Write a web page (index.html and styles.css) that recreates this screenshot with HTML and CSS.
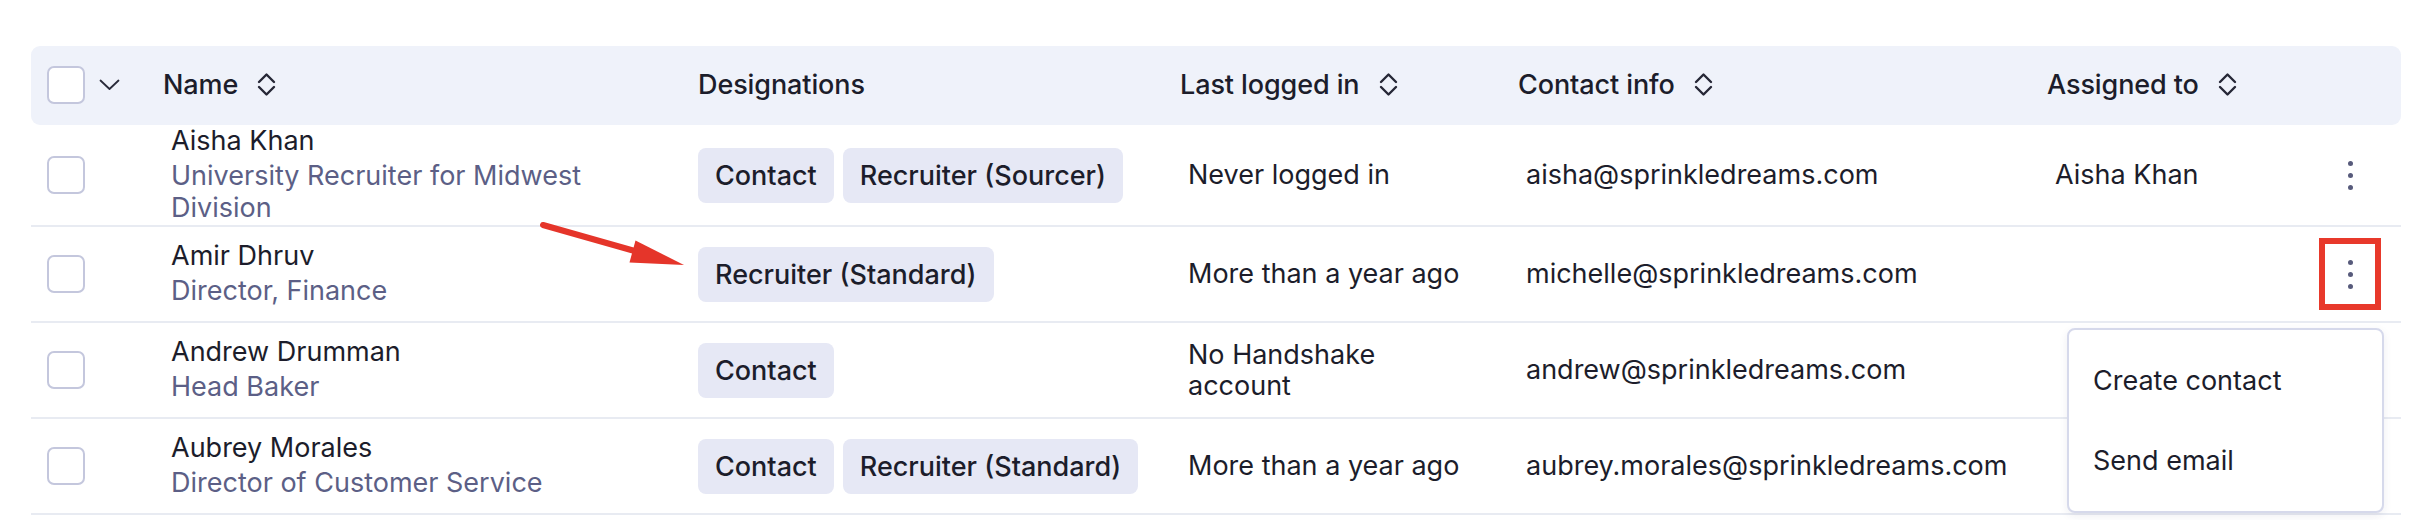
FILE: index.html
```html
<!DOCTYPE html>
<html lang="en">
<head>
<meta charset="utf-8">
<title>Users</title>
<link rel="stylesheet" href="styles.css">
</head>
<body>
<div class="page">
  <div class="table">
    <div class="thead">
      <div class="cell sel">
        <span class="checkbox"></span>
        <svg class="chev" width="21" height="12" viewBox="0 0 21 12"><path d="M1.5 1.5 L10.5 10 L19.5 1.5" fill="none" stroke="#2a2b3a" stroke-width="1.8" stroke-linecap="round" stroke-linejoin="round"/></svg>
      </div>
      <div class="cell th">Name <svg class="sort" width="19" height="25" viewBox="0 0 19 25"><path d="M2 10 L9.5 2.5 L17 10 M2 15 L9.5 22.5 L17 15" fill="none" stroke="#262736" stroke-width="2.4" stroke-linecap="round" stroke-linejoin="round"/></svg></div>
      <div class="cell th">Designations</div>
      <div class="cell th">Last logged in <svg class="sort" width="19" height="25" viewBox="0 0 19 25"><path d="M2 10 L9.5 2.5 L17 10 M2 15 L9.5 22.5 L17 15" fill="none" stroke="#262736" stroke-width="2.4" stroke-linecap="round" stroke-linejoin="round"/></svg></div>
      <div class="cell th">Contact info <svg class="sort" width="19" height="25" viewBox="0 0 19 25"><path d="M2 10 L9.5 2.5 L17 10 M2 15 L9.5 22.5 L17 15" fill="none" stroke="#262736" stroke-width="2.4" stroke-linecap="round" stroke-linejoin="round"/></svg></div>
      <div class="cell th">Assigned to <svg class="sort" width="19" height="25" viewBox="0 0 19 25"><path d="M2 10 L9.5 2.5 L17 10 M2 15 L9.5 22.5 L17 15" fill="none" stroke="#262736" stroke-width="2.4" stroke-linecap="round" stroke-linejoin="round"/></svg></div>
      <div class="cell"></div>
    </div>

    <div class="row">
      <div class="cell sel"><span class="checkbox"></span></div>
      <div class="cell text person">
        <div class="pname">Aisha Khan</div>
        <div class="ptitle">University Recruiter for Midwest Division</div>
      </div>
      <div class="cell tags"><span class="tag">Contact</span><span class="tag">Recruiter (Sourcer)</span></div>
      <div class="cell text"><span class="login">Never logged in</span></div>
      <div class="cell text">aisha@sprinkledreams.com</div>
      <div class="cell text">Aisha Khan</div>
      <div class="cell act"><button class="kebab"><i></i><i></i><i></i></button></div>
    </div>

    <div class="row">
      <div class="cell sel"><span class="checkbox"></span></div>
      <div class="cell text person">
        <div class="pname">Amir Dhruv</div>
        <div class="ptitle">Director, Finance</div>
      </div>
      <div class="cell tags"><span class="tag">Recruiter (Standard)</span></div>
      <div class="cell text"><span class="login">More than a year ago</span></div>
      <div class="cell text">michelle@sprinkledreams.com</div>
      <div class="cell text"></div>
      <div class="cell act"><button class="kebab highlight"><i></i><i></i><i></i></button></div>
    </div>

    <div class="row">
      <div class="cell sel"><span class="checkbox"></span></div>
      <div class="cell text person">
        <div class="pname">Andrew Drumman</div>
        <div class="ptitle">Head Baker</div>
      </div>
      <div class="cell tags"><span class="tag">Contact</span></div>
      <div class="cell text"><span class="login">No Handshake account</span></div>
      <div class="cell text">andrew@sprinkledreams.com</div>
      <div class="cell text"></div>
      <div class="cell act"><button class="kebab"><i></i><i></i><i></i></button></div>
    </div>

    <div class="row">
      <div class="cell sel"><span class="checkbox"></span></div>
      <div class="cell text person">
        <div class="pname">Aubrey Morales</div>
        <div class="ptitle">Director of Customer Service</div>
      </div>
      <div class="cell tags"><span class="tag">Contact</span><span class="tag">Recruiter (Standard)</span></div>
      <div class="cell text"><span class="login">More than a year ago</span></div>
      <div class="cell text">aubrey.morales@sprinkledreams.com</div>
      <div class="cell text"></div>
      <div class="cell act"><button class="kebab"><i></i><i></i><i></i></button></div>
    </div>
  </div>

  <div class="menu">
    <div class="menu-item">Create contact</div>
    <div class="menu-item">Send email</div>
  </div>

  <svg class="arrow" width="2422" height="520" viewBox="0 0 2422 520">
    <line x1="543" y1="225" x2="640" y2="252.5" stroke="#e5352a" stroke-width="6" stroke-linecap="round"/>
    <polygon points="684,265 635.5,240.5 629.5,262.5" fill="#e5352a"/>
  </svg>
</div>
</body>
</html>
```
FILE: styles.css
```css
* { box-sizing: border-box; }

html, body {
  margin: 0;
  background: #ffffff;
}

body {
  font-family: Inter, "Noto Sans", "Liberation Sans", sans-serif;
  font-size: 27px;
  color: #1c1d2b;
}

.page {
  position: relative;
  width: 2422px;
  height: 520px;
  padding: 46px 21px 0 31px;
  overflow: hidden;
}

.table {
  width: 2370px;
}

.thead,
.row {
  display: grid;
  grid-template-columns: 132px 535px 482px 338px 529px 272px 1fr;
  align-items: center;
}

.thead {
  height: 79px;
  padding-bottom: 2px;
  background: #eff2fa;
  border-radius: 9px;
}

.row {
  min-height: 96px;
  border-bottom: 2px solid #e8ebf2;
}

.cell {
  display: flex;
  align-items: center;
  min-width: 0;
}

.sel {
  padding-left: 16px;
  gap: 14px;
}

.checkbox {
  display: block;
  width: 38px;
  height: 38px;
  border: 2px solid #c4c7dd;
  border-radius: 7px;
  background: #ffffff;
}

.chev {
  display: block;
}

.th {
  font-weight: 500;
  gap: 19px;
  letter-spacing: -0.1px;
}

.sort {
  display: block;
  flex: none;
}

.text {
  padding-left: 8px;
  line-height: 31.5px;
}

.person {
  flex-direction: column;
  align-items: flex-start;
  padding-bottom: 2px;
}

.pname {
  line-height: 32px;
  margin-bottom: 3px;
}

.ptitle {
  max-width: 460px;
  color: #5c5f86;
}

.login {
  max-width: 290px;
}

.tags {
  gap: 9px;
}

.tag {
  display: inline-flex;
  align-items: center;
  height: 55px;
  padding: 0 17px;
  border-radius: 8px;
  background: #e6e8f5;
  font-weight: 500;
  white-space: nowrap;
}

.act {
  justify-content: flex-start;
}

.kebab {
  display: flex;
  flex-direction: column;
  align-items: center;
  justify-content: center;
  gap: 7px;
  width: 62px;
  height: 72px;
  padding: 0;
  border: 6px solid transparent;
  background: transparent;
}

.kebab i {
  display: block;
  width: 5px;
  height: 5px;
  border-radius: 50%;
  background: #575a7b;
}

.kebab.highlight {
  border-color: #e8392b;
}

.menu {
  position: absolute;
  left: 2067px;
  top: 328px;
  width: 317px;
  height: 185px;
  padding: 10px 0 12px;
  background: #ffffff;
  border: 2px solid #d6d9eb;
  border-radius: 8px;
  box-shadow: 0 3px 8px rgba(40, 44, 90, 0.08);
}

.menu-item {
  height: 80px;
  display: flex;
  align-items: center;
  padding-left: 24px;
}

.arrow {
  position: absolute;
  left: 0;
  top: 0;
  pointer-events: none;
}
```
